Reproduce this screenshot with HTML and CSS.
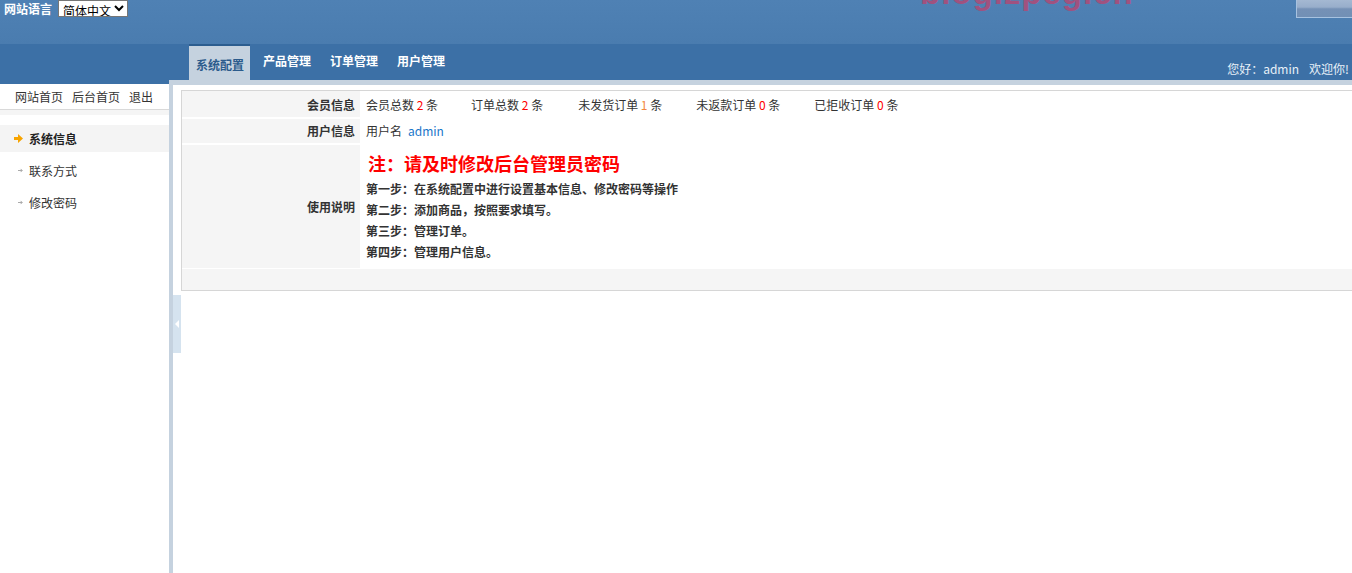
FILE: index.html
```html
<!DOCTYPE html>
<html lang="zh-CN">
<head>
<meta charset="utf-8">
<title>后台管理</title>
<link rel="stylesheet" href="styles.css">
</head>
<body>
<div class="header">
  <div class="lang">
    <span class="lang-label">网站语言</span>
    <select class="lang-select"><option>简体中文</option></select>
  </div>
  <div class="watermark">blog.zpeg.cn</div>
  <div class="top-btn"></div>
</div>
<div class="nav">
  <ul class="tabs">
    <li class="tab active">系统配置</li>
    <li class="tab">产品管理</li>
    <li class="tab">订单管理</li>
    <li class="tab">用户管理</li>
  </ul>
  <div class="welcome">您好：admin<span class="welcome-gap">欢迎你!</span></div>
</div>
<div class="layout">
  <aside class="sidebar">
    <div class="quick-links">
      <a class="quick-link">网站首页</a><a class="quick-link">后台首页</a><a class="quick-link">退出</a>
    </div>
    <div class="sidebar-sep"></div>
    <ul class="menu">
      <li class="menu-item active">
        <span class="menu-icon"><svg width="9" height="9" viewBox="0 0 9 9"><path d="M0 3H4V0L9 4.5L4 9V6H0Z" fill="#f7a400"/></svg></span>系统信息
      </li>
      <li class="menu-item">
        <span class="menu-icon"><svg width="5" height="5" viewBox="0 0 5 5"><path d="M0 2.5H4.2M2.6 0.9L4.2 2.5L2.6 4.1" fill="none" stroke="#aaa" stroke-width="1"/></svg></span>联系方式
      </li>
      <li class="menu-item">
        <span class="menu-icon"><svg width="5" height="5" viewBox="0 0 5 5"><path d="M0 2.5H4.2M2.6 0.9L4.2 2.5L2.6 4.1" fill="none" stroke="#aaa" stroke-width="1"/></svg></span>修改密码
      </li>
    </ul>
  </aside>
  <main class="main">
    <div class="collapse-handle"><svg width="4" height="8" viewBox="0 0 4 8"><path d="M4 0V8L0 4Z" fill="#fff"/></svg></div>
    <div class="info-table">
      <div class="cell label row1">会员信息</div>
      <div class="cell value row1">
        <span class="stat">会员总数 <em class="num red">2</em> 条</span>
        <span class="stat">订单总数 <em class="num red">2</em> 条</span>
        <span class="stat">未发货订单 <em class="num orange">1</em> 条</span>
        <span class="stat">未返款订单 <em class="num red">0</em> 条</span>
        <span class="stat">已拒收订单 <em class="num red">0</em> 条</span>
      </div>
      <div class="cell label row2">用户信息</div>
      <div class="cell value row2">用户名 <a class="user-link">admin</a></div>
      <div class="cell label row3">使用说明</div>
      <div class="cell value row3 guide">
        <div class="notice">注：请及时修改后台管理员密码</div>
        <div class="step">第一步：在系统配置中进行设置基本信息、修改密码等操作</div>
        <div class="step">第二步：添加商品，按照要求填写。</div>
        <div class="step">第三步：管理订单。</div>
        <div class="step">第四步：管理用户信息。</div>
      </div>
      <div class="cell footer-row"></div>
    </div>
  </main>
</div>
</body>
</html>
```
FILE: styles.css
```css
* { box-sizing: border-box; }
html, body { margin: 0; padding: 0; }
body {
  font-family: "Noto Sans CJK SC", "Noto Sans", sans-serif;
  font-size: 12px;
  color: #333;
  background: #fff;
  overflow: hidden;
  height: 573px;
}
ul { list-style: none; margin: 0; padding: 0; }
a { text-decoration: none; color: inherit; cursor: pointer; }

/* header */
.header {
  position: relative;
  height: 44px;
  background: linear-gradient(#4f81b4, #4a7caf);
  overflow: hidden;
}
.lang {
  display: flex;
  align-items: flex-start;
  padding-left: 4px;
}
.lang-label {
  color: #fff;
  font-weight: bold;
  line-height: 18px;
  margin-right: 6px;
}
.lang-select {
  width: 70px;
  height: 17px;
  font-family: "Noto Sans CJK SC", sans-serif;
  font-size: 12px;
  line-height: 15px;
  padding: 0;
  border: 1px solid #767676;
  border-radius: 0;
  background: #fff;
  color: #000;
}
.watermark {
  position: absolute;
  left: 920px;
  top: -24px;
  font-family: "Liberation Sans", sans-serif;
  font-weight: bold;
  font-size: 33px;
  line-height: 33px;
  letter-spacing: 1px;
  color: #a0527f;
}
.top-btn {
  position: absolute;
  right: -4px;
  top: -2px;
  width: 60px;
  height: 20px;
  border: 1px solid #a7c2e0;
  background: linear-gradient(#a6bad3 0%, #98aecb 45%, #7591b6 55%, #7290b5 100%);
}

/* nav */
.nav {
  display: flex;
  height: 36px;
  background: #3c70a6;
  padding-left: 189px;
}
.tabs { display: flex; }
.tab {
  height: 36px;
  padding: 9px 6px 0 7px;
  margin-right: 6px;
  line-height: 16px;
  color: #fff;
  font-weight: bold;
}
.tab.active {
  background: #c5d2df;
  border-top: 2px solid #2c5d8f;
  padding-top: 11px;
  color: #2b5b8c;
}
.welcome {
  margin-left: auto;
  align-self: flex-end;
  padding: 0 3px 3px 0;
  line-height: 16px;
  color: #e8f0f8;
}
.welcome-gap { margin-left: 10px; }

/* layout */
.layout {
  display: flex;
  height: calc(100vh - 80px);
}
.sidebar {
  width: 169px;
  flex: none;
  border-top: 4px solid #3c70a6;
}
.quick-links {
  display: flex;
  padding-left: 15px;
  height: 25px;
  line-height: 25px;
  color: #333;
}
.quick-link { margin-right: 9px; }
.sidebar-sep {
  height: 6px;
  border-top: 1px solid #d9d9d9;
  background: #f5f5f5;
  margin-bottom: 10px;
}
.menu-item {
  display: flex;
  align-items: center;
  height: 27px;
  margin-bottom: 5px;
  padding-left: 14px;
  color: #333;
}
.menu-item.active {
  background: #f4f4f4;
  font-weight: bold;
  color: #222;
}
.menu-icon {
  display: flex;
  justify-content: flex-end;
  width: 9px;
  margin-right: 6px;
}
.menu-icon svg { display: block; }

/* main */
.main {
  position: relative;
  flex: 1;
  min-width: 0;
  border-top: 5px solid #c5d2df;
  border-left: 4px solid #c5d2df;
  padding: 5px 0 0 8px;
}
.collapse-handle {
  position: absolute;
  left: 0;
  top: 210px;
  width: 8px;
  height: 58px;
  background: #d5e3ef;
  display: flex;
  align-items: center;
  justify-content: center;
}
.collapse-handle svg { display: block; }

.info-table {
  display: grid;
  grid-template-columns: 178px 1fr;
  grid-template-rows: 26px 24px 123px 20px;
  row-gap: 2px;
  border: 1px solid #d6d6d6;
  border-right: none;
  margin-right: -2px;
  background: #fff;
}
.cell { display: flex; align-items: center; }
.label {
  justify-content: flex-end;
  padding-right: 5px;
  background: #f5f5f5;
  font-weight: bold;
  color: #333;
}
.label.row2, .value.row2 { padding-bottom: 2px; }
.value {
  padding-left: 6px;
  color: #333;
}
.stat { margin-right: 33px; white-space: nowrap; }
.stat:nth-child(n+3) { margin-left: 2px; margin-right: 32px; }
.num { font-style: normal; }
.red { color: #f00; }
.orange { color: #f3883f; }
.user-link { color: #1a76c9; margin-left: 6px; }

.guide {
  flex-direction: column;
  align-items: flex-start;
  justify-content: flex-start;
  padding-top: 6px;
}
.notice {
  color: #f00;
  font-size: 18px;
  font-weight: bold;
  line-height: 24px;
  padding-left: 2px;
  margin-bottom: 3px;
}
.step {
  font-weight: bold;
  line-height: 21px;
  color: #333;
}
.footer-row {
  grid-column: 1 / -1;
  background: #f5f5f5;
  margin-top: -1px;
  height: 21px;
}
```
